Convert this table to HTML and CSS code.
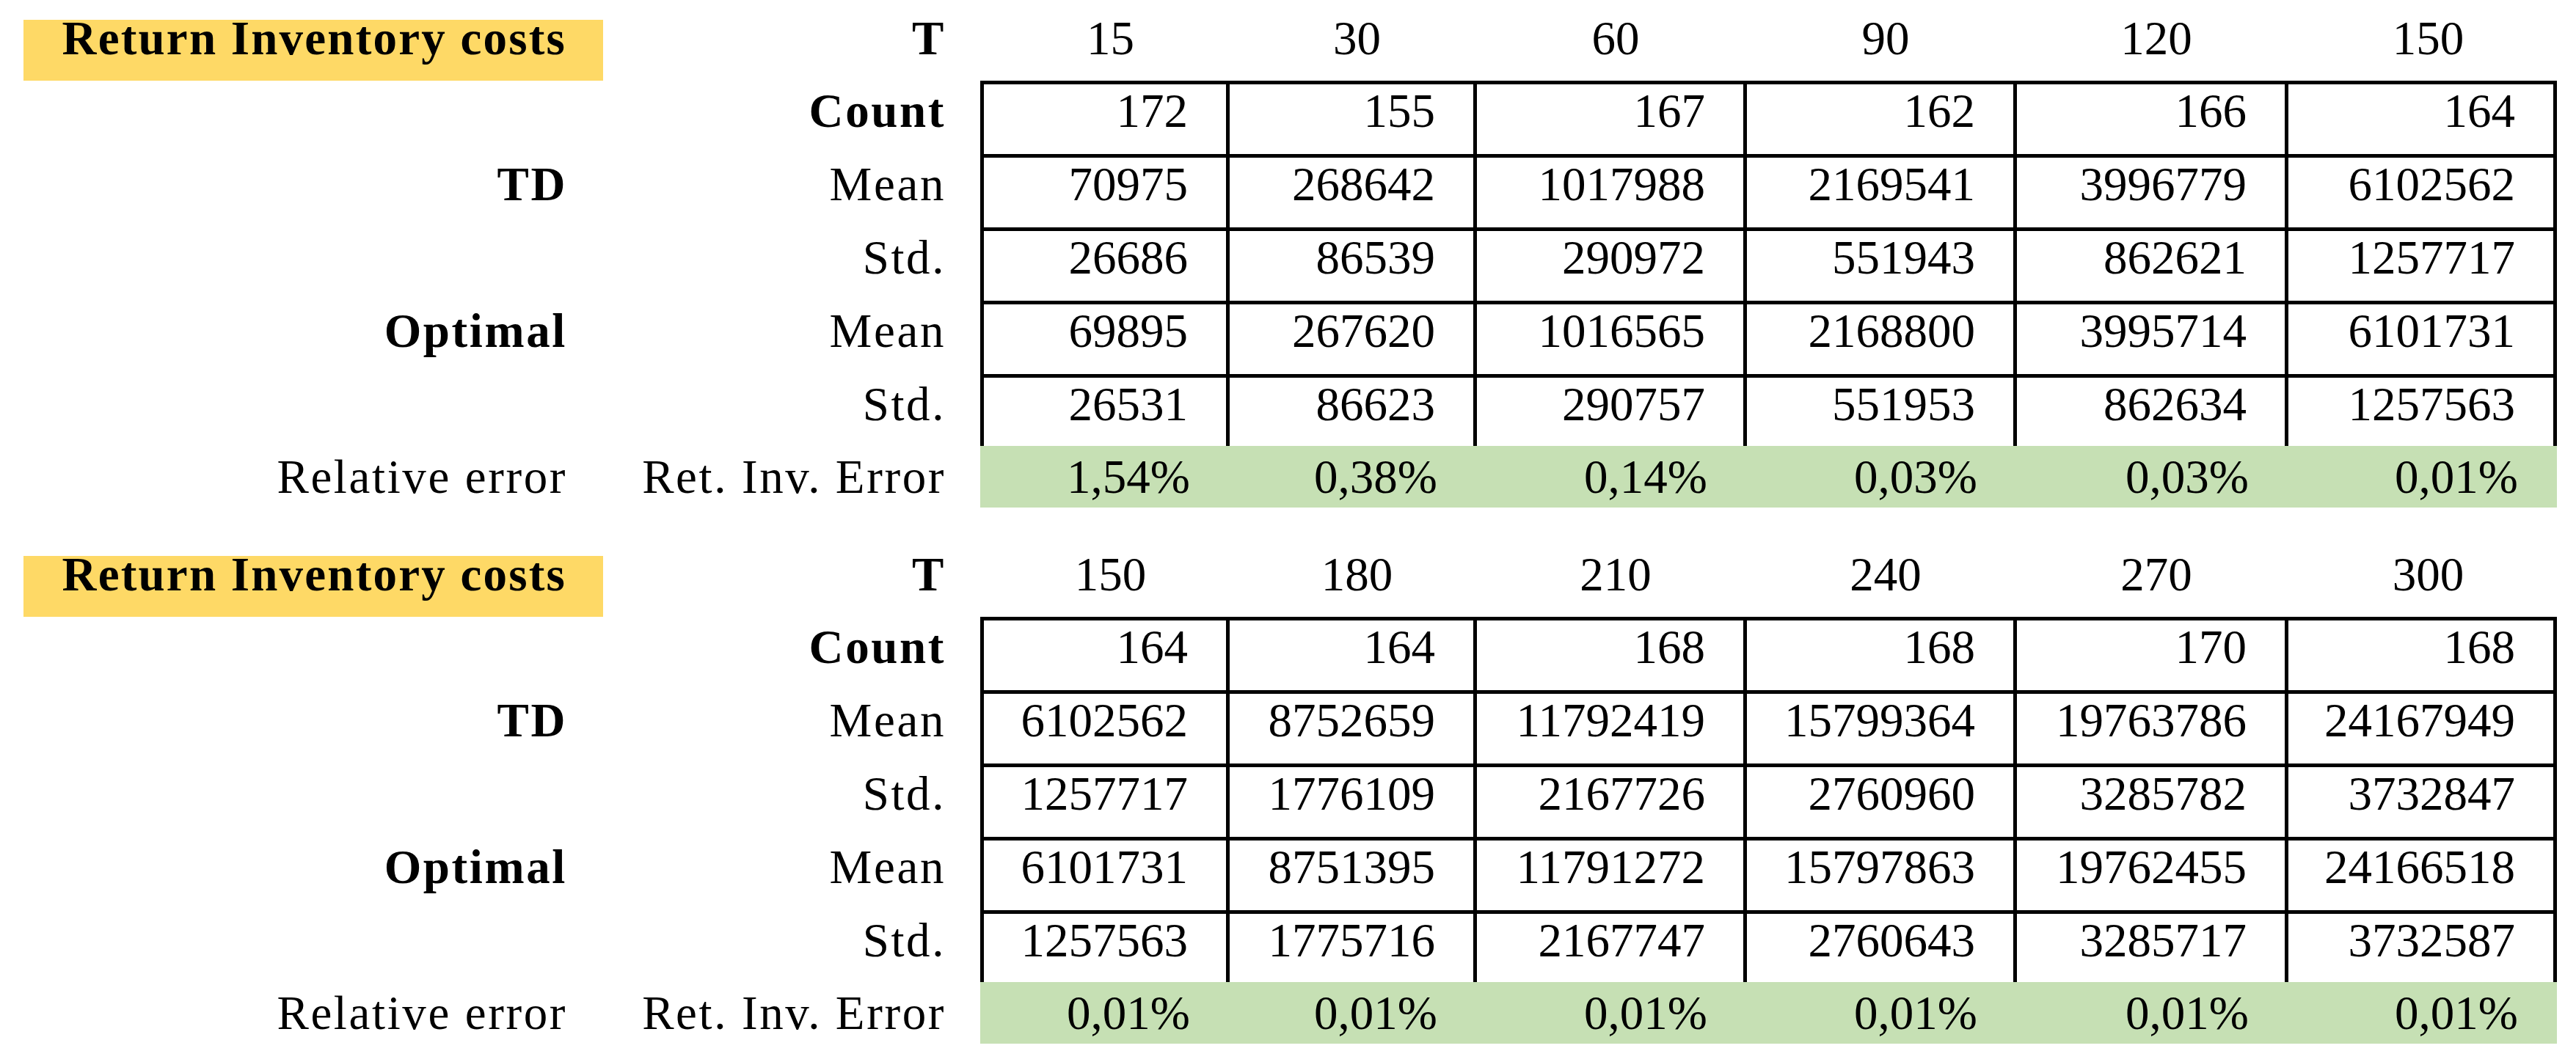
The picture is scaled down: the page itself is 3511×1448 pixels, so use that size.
FILE: index.html
```html
<!DOCTYPE html>
<html>
<head>
<meta charset="utf-8">
<link rel="stylesheet" href="styles.css">
</head>
<body>
<div class="page">
  <div class="block">
    <div class="title">Return Inventory costs</div>
    <div class="lblb hd bold">T</div>
    <div class="hnum">15</div><div class="hnum">30</div><div class="hnum">60</div><div class="hnum">90</div><div class="hnum">120</div><div class="hnum">150</div>

    <div class="lbla"></div>
    <div class="lblb bold">Count</div>
    <div class="cell">172</div><div class="cell">155</div><div class="cell">167</div><div class="cell">162</div><div class="cell">166</div><div class="cell last">164</div>

    <div class="lbla bold">TD</div>
    <div class="lblb">Mean</div>
    <div class="cell">70975</div><div class="cell">268642</div><div class="cell">1017988</div><div class="cell">2169541</div><div class="cell">3996779</div><div class="cell last">6102562</div>

    <div class="lbla"></div>
    <div class="lblb">Std.</div>
    <div class="cell">26686</div><div class="cell">86539</div><div class="cell">290972</div><div class="cell">551943</div><div class="cell">862621</div><div class="cell last">1257717</div>

    <div class="lbla bold">Optimal</div>
    <div class="lblb">Mean</div>
    <div class="cell">69895</div><div class="cell">267620</div><div class="cell">1016565</div><div class="cell">2168800</div><div class="cell">3995714</div><div class="cell last">6101731</div>

    <div class="lbla"></div>
    <div class="lblb">Std.</div>
    <div class="cell">26531</div><div class="cell">86623</div><div class="cell">290757</div><div class="cell">551953</div><div class="cell">862634</div><div class="cell last">1257563</div>

    <div class="lbla gl">Relative error</div>
    <div class="lblb gl">Ret. Inv. Error</div>
    <div class="g">1,54%</div><div class="g">0,38%</div><div class="g">0,14%</div><div class="g">0,03%</div><div class="g">0,03%</div><div class="g glast">0,01%</div>
  </div>

  <div class="block">
    <div class="title">Return Inventory costs</div>
    <div class="lblb hd bold">T</div>
    <div class="hnum">150</div><div class="hnum">180</div><div class="hnum">210</div><div class="hnum">240</div><div class="hnum">270</div><div class="hnum">300</div>

    <div class="lbla"></div>
    <div class="lblb bold">Count</div>
    <div class="cell">164</div><div class="cell">164</div><div class="cell">168</div><div class="cell">168</div><div class="cell">170</div><div class="cell last">168</div>

    <div class="lbla bold">TD</div>
    <div class="lblb">Mean</div>
    <div class="cell">6102562</div><div class="cell">8752659</div><div class="cell">11792419</div><div class="cell">15799364</div><div class="cell">19763786</div><div class="cell last">24167949</div>

    <div class="lbla"></div>
    <div class="lblb">Std.</div>
    <div class="cell">1257717</div><div class="cell">1776109</div><div class="cell">2167726</div><div class="cell">2760960</div><div class="cell">3285782</div><div class="cell last">3732847</div>

    <div class="lbla bold">Optimal</div>
    <div class="lblb">Mean</div>
    <div class="cell">6101731</div><div class="cell">8751395</div><div class="cell">11791272</div><div class="cell">15797863</div><div class="cell">19762455</div><div class="cell last">24166518</div>

    <div class="lbla"></div>
    <div class="lblb">Std.</div>
    <div class="cell">1257563</div><div class="cell">1775716</div><div class="cell">2167747</div><div class="cell">2760643</div><div class="cell">3285717</div><div class="cell last">3732587</div>

    <div class="lbla gl">Relative error</div>
    <div class="lblb gl">Ret. Inv. Error</div>
    <div class="g">0,01%</div><div class="g">0,01%</div><div class="g">0,01%</div><div class="g">0,01%</div><div class="g">0,01%</div><div class="g glast">0,01%</div>
  </div>
</div>
</body>
</html>
```

FILE: styles.css
```css
html, body {
  margin: 0;
  padding: 0;
  background: #ffffff;
}

.page {
  width: 3511px;
  height: 1448px;
  padding: 27px 0 0 32px;
  box-sizing: border-box;
  display: flex;
  flex-direction: column;
  gap: 66px;
  font-family: "Liberation Serif", "Times New Roman", serif;
  font-size: 65px;
  line-height: 65px;
  color: #000;
}

.block {
  display: grid;
  grid-template-columns: 790px 514px 335px 337px 368px 368px 370px 371px;
  grid-template-rows: 83px 100px 100px 100px 100px 98px 84px;
}

.bold {
  font-weight: bold;
}

.title {
  background: #fed966;
  font-weight: bold;
  text-align: right;
  padding-right: 50px;
  letter-spacing: 2.2px;
  line-height: 51px;
  white-space: nowrap;
}

.lbla,
.lblb {
  text-align: right;
  letter-spacing: 2.6px;
  padding-top: 9px;
  white-space: nowrap;
}

.lbla {
  padding-right: 49px;
}

.lblb {
  padding-right: 47px;
}

.lblb.hd {
  padding-top: 0;
  line-height: 51px;
}

.lbla.gl,
.lblb.gl {
  padding-top: 10px;
}

.hnum {
  text-align: center;
  padding-left: 20px;
  line-height: 51px;
}

.cell {
  border-top: 5px solid #000;
  border-left: 5px solid #000;
  text-align: right;
  padding-top: 4px;
  padding-right: 52px;
}

.cell.last {
  border-right: 5px solid #000;
}

.g {
  background: #c6e0b4;
  text-align: right;
  padding-top: 10px;
  padding-right: 49px;
}

.g.glast {
  padding-right: 53px;
}
```
